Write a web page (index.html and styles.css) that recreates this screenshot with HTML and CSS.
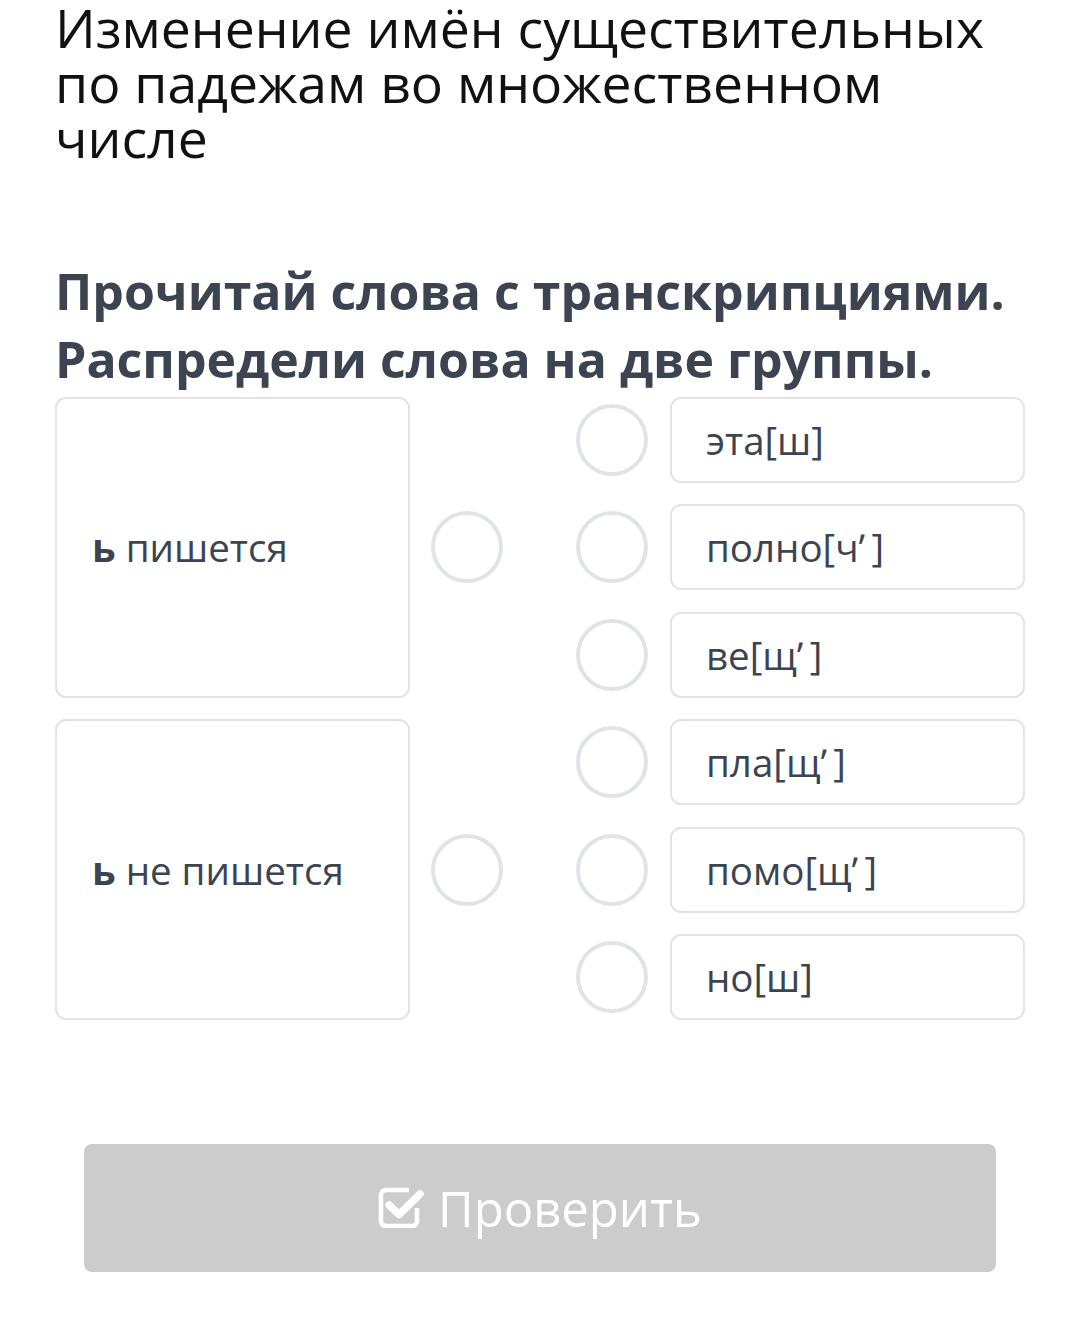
FILE: index.html
```html
<!DOCTYPE html>
<html lang="ru">
<head>
<meta charset="utf-8">
<link rel="stylesheet" href="styles.css">
</head>
<body>
<div class="page">
  <h1 class="title">Изменение имён существительных по падежам во множественном числе</h1>
  <p class="task">Прочитай слова с транскрипциями. Распредели слова на две группы.</p>
  <div class="board">
    <div class="group g1"><span class="text"><b>ь</b> пишется</span></div>
    <div class="group g2"><span class="text"><b>ь</b> не пишется</span></div>
    <div class="dot d-g1"></div>
    <div class="dot d-g2"></div>
    <div class="dot r1"></div>
    <div class="dot r2"></div>
    <div class="dot r3"></div>
    <div class="dot r4"></div>
    <div class="dot r5"></div>
    <div class="dot r6"></div>
    <div class="word r1"><span class="text">эта[ш]</span></div>
    <div class="word r2"><span class="text">полно[чʼ&thinsp;]</span></div>
    <div class="word r3"><span class="text">ве[щʼ&thinsp;]</span></div>
    <div class="word r4"><span class="text">пла[щʼ&thinsp;]</span></div>
    <div class="word r5"><span class="text">помо[щʼ&thinsp;]</span></div>
    <div class="word r6"><span class="text">но[ш]</span></div>
  </div>
  <button class="check" type="button">
    <svg class="check-icon" width="46" height="42" viewBox="0 0 46 42" aria-hidden="true">
      <path d="M31 4 H8 a5 5 0 0 0 -5 5 V35 a5 5 0 0 0 5 5 H34 a5 5 0 0 0 5 -5 V22" fill="none" stroke="#fff" stroke-width="4.5" stroke-linejoin="round"/>
      <path d="M11 19 L21 28.5 L42 8" fill="none" stroke="#fff" stroke-width="7.5" stroke-linecap="round" stroke-linejoin="round"/>
    </svg>
    <span>Проверить</span>
  </button>
</div>
</body>
</html>
```
FILE: styles.css
```css
* { box-sizing: border-box; }
html, body { margin: 0; padding: 0; background: #fff; }
body {
  font-family: "Open Sans", "Noto Sans", "DejaVu Sans", sans-serif;
  width: 1080px;
  height: 1344px;
  overflow: hidden;
}
.page {
  padding: 0 55px;
}
.title {
  margin: 0;
  font-size: 53.5px;
  line-height: 55px;
  font-weight: 400;
  color: #111;
}
.task {
  margin: 92px 0 0 0;
  font-size: 50px;
  line-height: 68px;
  font-weight: 700;
  color: #3c4451;
}
.board {
  margin-top: 4px;
  display: grid;
  grid-template-columns: 355px 93px 145px 377px;
  grid-template-rows: repeat(6, 86px);
  row-gap: 21.4px;
}
.group {
  grid-column: 1;
  border: 2px solid #e1e3e5;
  border-radius: 11px;
  display: flex;
  align-items: center;
  padding-left: 35px;
  color: #3c4451;
  font-size: 38.5px;
}
.group b { font-weight: 700; }
.g1 { grid-row: 1 / span 3; }
.g2 { grid-row: 4 / span 3; }
.dot {
  width: 72px;
  height: 72px;
  border: 4.5px solid #e1e4e7;
  border-radius: 50%;
  align-self: center;
  justify-self: end;
}
.d-g1 { grid-column: 2; grid-row: 1 / span 3; }
.d-g2 { grid-column: 2; grid-row: 4 / span 3; }
.dot.r1, .dot.r2, .dot.r3, .dot.r4, .dot.r5, .dot.r6 { grid-column: 3; }
.r1 { grid-row: 1; }
.r2 { grid-row: 2; }
.r3 { grid-row: 3; }
.r4 { grid-row: 4; }
.r5 { grid-row: 5; }
.r6 { grid-row: 6; }
.word {
  grid-column: 4;
  justify-self: end;
  width: 355px;
  border: 2px solid #e1e3e5;
  border-radius: 11px;
  display: flex;
  align-items: center;
  padding-left: 34px;
  color: #3c4451;
  font-size: 38.5px;
}
.check {
  margin: 124px 29px 0 29px;
  width: 912px;
  height: 128px;
  border: 0;
  border-radius: 8px;
  background: #cccccc;
  color: #fff;
  font-family: inherit;
  font-size: 49px;
  display: flex;
  align-items: center;
  justify-content: center;
  gap: 14px;
  padding: 0;
}
.check-icon { display: block; margin-top: -2px; }
```
